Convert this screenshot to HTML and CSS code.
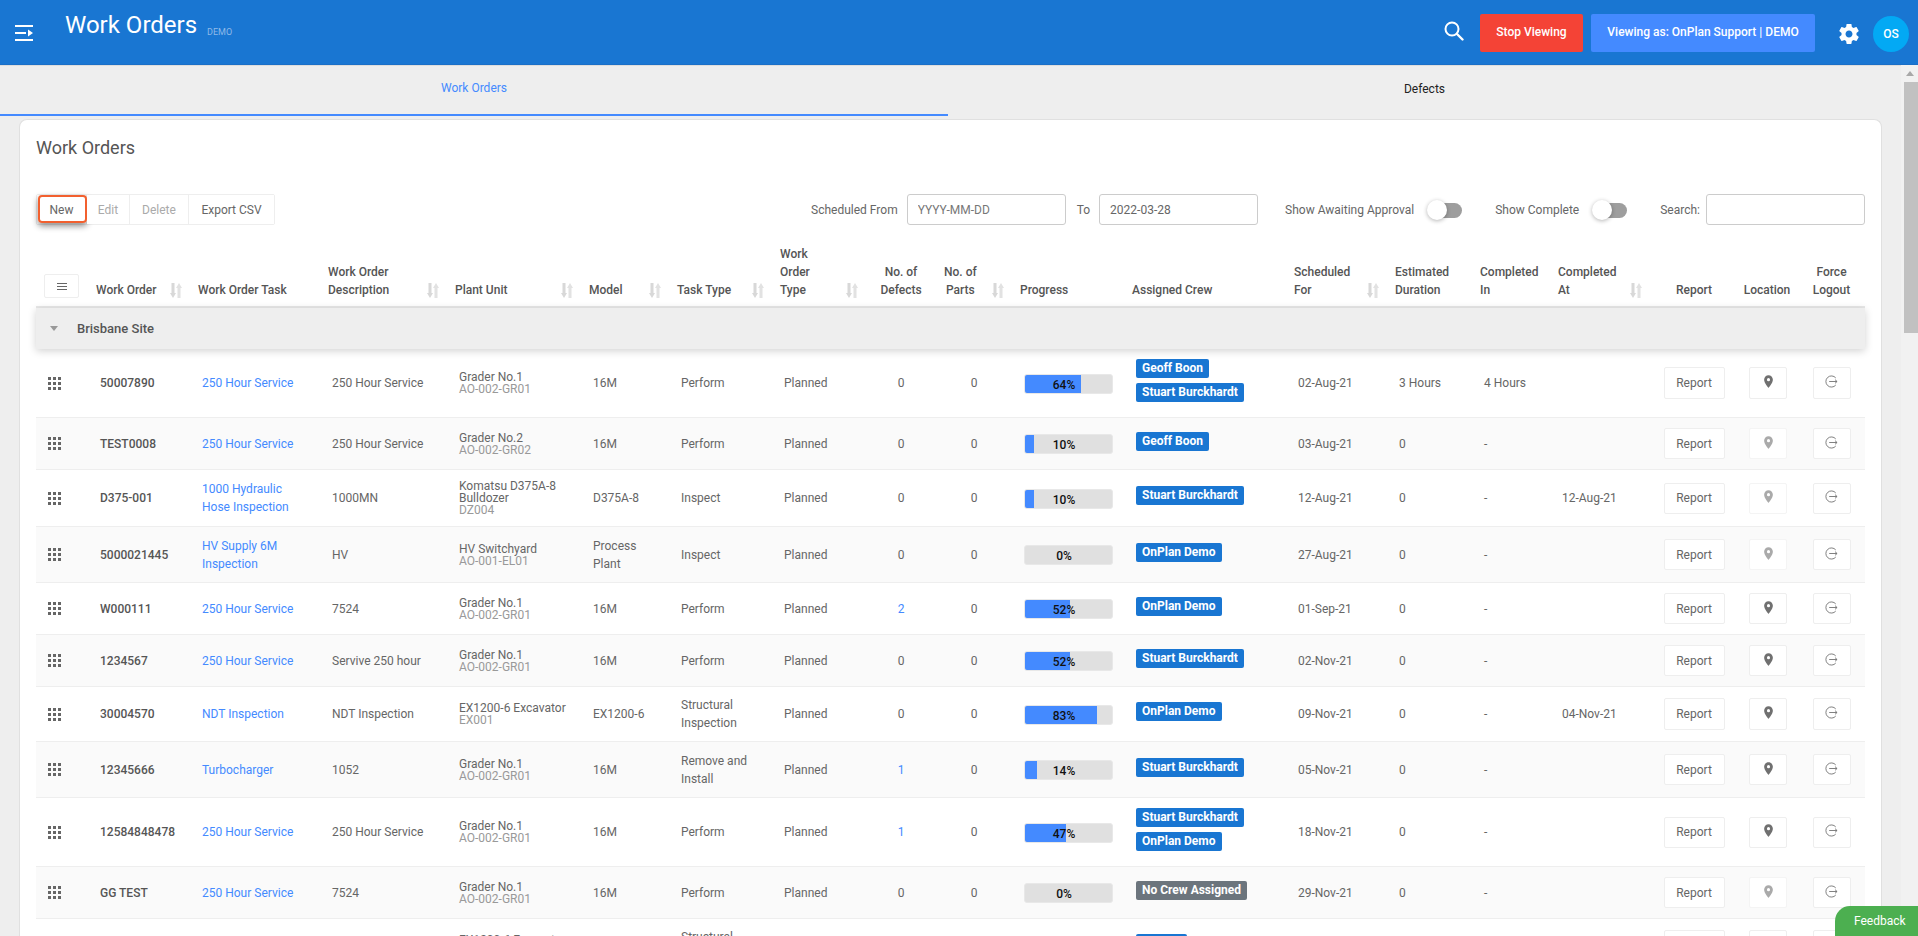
FILE: index.html
```html
<!DOCTYPE html>
<html lang="en">
<head>
<meta charset="utf-8">
<title>Work Orders</title>
<link rel="stylesheet" href="styles.css">
</head>
<body>
<svg class="defs" width="0" height="0" aria-hidden="true">
  <symbol id="sort" viewBox="0 0 12 15"><path d="M1.500 0h3v10H6l-3 5-3-5h1.500z" fill="#d8d8d8"/><path d="M7.500 15h3V5H12L9 0 6 5h1.500z" fill="#e2e2e2"/></symbol>
  <symbol id="drag" viewBox="0 0 13 13"><path d="M0 0h3v3H0zM5 0h3v3H5zM10 0h3v3h-3zM0 5h3v3H0zM5 5h3v3H5zM10 5h3v3h-3zM0 10h3v3H0zM5 10h3v3H5zM10 10h3v3h-3z" fill="currentColor"/></symbol>
  <symbol id="pin" viewBox="0 0 24 24"><path fill="currentColor" d="M12 2C8.130 2 5 5.130 5 9c0 5.250 7 13 7 13s7-7.750 7-13c0-3.870-3.130-7-7-7zm0 9.500a2.500 2.500 0 0 1 0-5 2.500 2.500 0 0 1 0 5z"/></symbol>
  <symbol id="logout" viewBox="0 0 14 14"><path d="M11.600 3.200A6 6 0 1 0 11.600 10.800" fill="none" stroke="currentColor"/><path d="M4.500 7h8.500M10.800 5l2.200 2-2.200 2" fill="none" stroke="currentColor"/></symbol>
</svg>

<header class="topbar">
  <svg class="menu-icon" width="18" height="16" viewBox="0 0 18 16"><path d="M0 0h18v2H0zM0 7h11v2H0zM0 14h18v2H0zM13 4.500 18 8l-5 3.500z" fill="#fff"/></svg>
  <h1 class="page-title">Work Orders</h1>
  <span class="env">DEMO</span>
  <svg class="search-icon" width="20" height="20" viewBox="0 0 20 20"><circle cx="8" cy="8" r="6.500" fill="none" stroke="#fff" stroke-width="2"/><path d="M13 13l5.500 5.500" stroke="#fff" stroke-width="2.400" stroke-linecap="round"/></svg>
  <button class="top-btn stop">Stop Viewing</button>
  <button class="top-btn viewing">Viewing as: OnPlan Support | DEMO</button>
  <svg class="gear" width="24" height="24" viewBox="0 0 24 24"><path fill="#fff" d="M19.430 12.980c.040-.320.070-.640.070-.980s-.030-.660-.070-.980l2.110-1.650c.190-.150.240-.420.120-.640l-2-3.460c-.120-.220-.390-.300-.610-.220l-2.490 1c-.520-.400-1.080-.730-1.690-.980l-.380-2.650C14.460 2.180 14.250 2 14 2h-4c-.250 0-.460.180-.490.420l-.380 2.650c-.610.250-1.170.590-1.690.980l-2.490-1c-.230-.090-.490 0-.610.220l-2 3.460c-.130.220-.070.490.120.640l2.110 1.650c-.040.320-.070.650-.070.980s.030.660.070.980l-2.110 1.650c-.190.150-.240.420-.120.640l2 3.460c.120.220.390.300.610.220l2.490-1c.520.400 1.080.730 1.690.980l.380 2.650c.030.240.240.420.490.420h4c.250 0 .460-.180.490-.420l.380-2.650c.610-.250 1.170-.590 1.690-.980l2.490 1c.230.090.490 0 .610-.220l2-3.460c.120-.220.070-.490-.120-.640l-2.110-1.650zM12 15.500c-1.930 0-3.500-1.570-3.500-3.500s1.570-3.500 3.500-3.500 3.500 1.570 3.500 3.500-1.570 3.500-3.500 3.500z"/></svg>
  <div class="avatar">OS</div>
</header>

<div class="layout">
  <main class="content">
    <nav class="tabs">
      <a class="tab tab-active">Work Orders</a>
      <a class="tab tab-second">Defects</a>
    </nav>
    <section class="card">
      <h2 class="card-title">Work Orders</h2>
      <div class="toolbar">
        <div class="btn-group">
          <button class="tool-btn hl">New</button>
          <button class="tool-btn off edit">Edit</button>
          <button class="tool-btn off del">Delete</button>
          <button class="tool-btn csv">Export CSV</button>
        </div>
        <div class="filters">
          <label class="lbl">Scheduled From</label>
          <input class="field" placeholder="YYYY-MM-DD">
          <label class="lbl lbl-to">To</label>
          <input class="field to-field" value="2022-03-28">
          <label class="lbl lbl-await">Show Awaiting Approval</label>
          <span class="toggle"></span>
          <label class="lbl lbl-comp">Show Complete</label>
          <span class="toggle"></span>
          <label class="lbl lbl-search">Search:</label>
          <input class="field">
        </div>
      </div>

      <table class="grid">
        <colgroup>
          <col class="c52"><col class="c102"><col class="c130"><col class="c127"><col class="c134"><col class="c88"><col class="c103"><col class="c94"><col class="c70"><col class="c76"><col class="c112"><col class="c162"><col class="c101"><col class="c85"><col class="c78"><col class="c100"><col class="c88"><col class="c60"><col class="c67">
        </colgroup>
        <thead>
          <tr>
            <th class="th-menu"><span class="col-menu"><i></i><i></i><i></i></span></th>
            <th><div class="th-in"><span>Work Order</span><svg class="sort"><use href="#sort"/></svg></div></th>
            <th><div class="th-in"><span>Work Order Task</span></div></th>
            <th><div class="th-in"><span>Work Order<br>Description</span><svg class="sort"><use href="#sort"/></svg></div></th>
            <th><div class="th-in"><span>Plant Unit</span><svg class="sort"><use href="#sort"/></svg></div></th>
            <th><div class="th-in"><span>Model</span><svg class="sort"><use href="#sort"/></svg></div></th>
            <th><div class="th-in"><span>Task Type</span><svg class="sort"><use href="#sort"/></svg></div></th>
            <th><div class="th-in"><span>Work<br>Order<br>Type</span><svg class="sort"><use href="#sort"/></svg></div></th>
            <th class="th-center">No. of<br>Defects</th>
            <th><div class="th-in th-parts"><span class="tc">No. of<br>Parts</span><svg class="sort"><use href="#sort"/></svg></div></th>
            <th><div class="th-in"><span>Progress</span></div></th>
            <th><div class="th-in"><span>Assigned Crew</span></div></th>
            <th><div class="th-in"><span>Scheduled<br>For</span><svg class="sort"><use href="#sort"/></svg></div></th>
            <th><div class="th-in"><span>Estimated<br>Duration</span></div></th>
            <th><div class="th-in"><span>Completed<br>In</span></div></th>
            <th><div class="th-in"><span>Completed<br>At</span><svg class="sort"><use href="#sort"/></svg></div></th>
            <th class="th-center">Report</th>
            <th class="th-center th-loc">Location</th>
            <th class="th-center">Force<br>Logout</th>
          </tr>
        </thead>
        <tbody>
          <tr class="group">
            <td colspan="19"><span class="caret"></span><span class="group-name">Brisbane Site</span></td>
          </tr>

          <tr class="h69">
            <td class="handle"><svg class="drag"><use href="#drag"/></svg></td>
            <td class="strong">50007890</td>
            <td><a class="link">250 Hour Service</a></td>
            <td>250 Hour Service</td>
            <td class="plant">Grader No.1<small>AO-002-GR01</small></td>
            <td>16M</td><td>Perform</td><td>Planned</td>
            <td class="num">0</td><td class="num">0</td>
            <td><div class="bar"><div class="fill" style="width:64%"></div><span class="pct">64%</span></div></td>
            <td class="crew"><div class="badges"><span class="badge">Geoff Boon</span><span class="badge">Stuart Burckhardt</span></div></td>
            <td>02-Aug-21</td><td>3 Hours</td><td>4 Hours</td><td></td>
            <td class="act"><button class="act-btn rep tall">Report</button></td>
            <td class="act"><button class="act-btn ico tall"><svg class="pin-i"><use href="#pin"/></svg></button></td>
            <td class="act"><button class="act-btn ico tall"><svg class="out-i"><use href="#logout"/></svg></button></td>
          </tr>

          <tr class="h52 alt">
            <td class="handle"><svg class="drag"><use href="#drag"/></svg></td>
            <td class="strong">TEST0008</td>
            <td><a class="link">250 Hour Service</a></td>
            <td>250 Hour Service</td>
            <td class="plant">Grader No.2<small>AO-002-GR02</small></td>
            <td>16M</td><td>Perform</td><td>Planned</td>
            <td class="num">0</td><td class="num">0</td>
            <td><div class="bar"><div class="fill" style="width:10%"></div><span class="pct">10%</span></div></td>
            <td class="crew"><div class="badges"><span class="badge">Geoff Boon</span></div></td>
            <td>03-Aug-21</td><td>0</td><td>-</td><td></td>
            <td class="act"><button class="act-btn rep">Report</button></td>
            <td class="act"><button class="act-btn ico dim"><svg class="pin-i"><use href="#pin"/></svg></button></td>
            <td class="act"><button class="act-btn ico"><svg class="out-i"><use href="#logout"/></svg></button></td>
          </tr>

          <tr class="h57">
            <td class="handle"><svg class="drag"><use href="#drag"/></svg></td>
            <td class="strong">D375-001</td>
            <td><a class="link">1000 Hydraulic Hose Inspection</a></td>
            <td>1000MN</td>
            <td class="plant">Komatsu D375A-8 Bulldozer<small>DZ004</small></td>
            <td>D375A-8</td><td>Inspect</td><td>Planned</td>
            <td class="num">0</td><td class="num">0</td>
            <td><div class="bar"><div class="fill" style="width:10%"></div><span class="pct">10%</span></div></td>
            <td class="crew"><div class="badges"><span class="badge">Stuart Burckhardt</span></div></td>
            <td>12-Aug-21</td><td>0</td><td>-</td><td>12-Aug-21</td>
            <td class="act"><button class="act-btn rep">Report</button></td>
            <td class="act"><button class="act-btn ico dim"><svg class="pin-i"><use href="#pin"/></svg></button></td>
            <td class="act"><button class="act-btn ico"><svg class="out-i"><use href="#logout"/></svg></button></td>
          </tr>

          <tr class="h56 alt">
            <td class="handle"><svg class="drag"><use href="#drag"/></svg></td>
            <td class="strong">5000021445</td>
            <td><a class="link">HV Supply 6M Inspection</a></td>
            <td>HV</td>
            <td class="plant">HV Switchyard<small>AO-001-EL01</small></td>
            <td>Process Plant</td><td>Inspect</td><td>Planned</td>
            <td class="num">0</td><td class="num">0</td>
            <td><div class="bar"><div class="fill" style="width:0%"></div><span class="pct">0%</span></div></td>
            <td class="crew"><div class="badges"><span class="badge">OnPlan Demo</span></div></td>
            <td>27-Aug-21</td><td>0</td><td>-</td><td></td>
            <td class="act"><button class="act-btn rep">Report</button></td>
            <td class="act"><button class="act-btn ico dim"><svg class="pin-i"><use href="#pin"/></svg></button></td>
            <td class="act"><button class="act-btn ico"><svg class="out-i"><use href="#logout"/></svg></button></td>
          </tr>

          <tr class="h52">
            <td class="handle"><svg class="drag"><use href="#drag"/></svg></td>
            <td class="strong">W000111</td>
            <td><a class="link">250 Hour Service</a></td>
            <td>7524</td>
            <td class="plant">Grader No.1<small>AO-002-GR01</small></td>
            <td>16M</td><td>Perform</td><td>Planned</td>
            <td class="num"><a class="link">2</a></td><td class="num">0</td>
            <td><div class="bar"><div class="fill" style="width:52%"></div><span class="pct">52%</span></div></td>
            <td class="crew"><div class="badges"><span class="badge">OnPlan Demo</span></div></td>
            <td>01-Sep-21</td><td>0</td><td>-</td><td></td>
            <td class="act"><button class="act-btn rep">Report</button></td>
            <td class="act"><button class="act-btn ico"><svg class="pin-i"><use href="#pin"/></svg></button></td>
            <td class="act"><button class="act-btn ico"><svg class="out-i"><use href="#logout"/></svg></button></td>
          </tr>

          <tr class="h52 alt">
            <td class="handle"><svg class="drag"><use href="#drag"/></svg></td>
            <td class="strong">1234567</td>
            <td><a class="link">250 Hour Service</a></td>
            <td>Servive 250 hour</td>
            <td class="plant">Grader No.1<small>AO-002-GR01</small></td>
            <td>16M</td><td>Perform</td><td>Planned</td>
            <td class="num">0</td><td class="num">0</td>
            <td><div class="bar"><div class="fill" style="width:52%"></div><span class="pct">52%</span></div></td>
            <td class="crew"><div class="badges"><span class="badge">Stuart Burckhardt</span></div></td>
            <td>02-Nov-21</td><td>0</td><td>-</td><td></td>
            <td class="act"><button class="act-btn rep">Report</button></td>
            <td class="act"><button class="act-btn ico"><svg class="pin-i"><use href="#pin"/></svg></button></td>
            <td class="act"><button class="act-btn ico"><svg class="out-i"><use href="#logout"/></svg></button></td>
          </tr>

          <tr class="h55">
            <td class="handle"><svg class="drag"><use href="#drag"/></svg></td>
            <td class="strong">30004570</td>
            <td><a class="link">NDT Inspection</a></td>
            <td>NDT Inspection</td>
            <td class="plant">EX1200-6 Excavator<small>EX001</small></td>
            <td>EX1200-6</td><td>Structural Inspection</td><td>Planned</td>
            <td class="num">0</td><td class="num">0</td>
            <td><div class="bar"><div class="fill" style="width:83%"></div><span class="pct">83%</span></div></td>
            <td class="crew"><div class="badges"><span class="badge">OnPlan Demo</span></div></td>
            <td>09-Nov-21</td><td>0</td><td>-</td><td>04-Nov-21</td>
            <td class="act"><button class="act-btn rep tall">Report</button></td>
            <td class="act"><button class="act-btn ico tall"><svg class="pin-i"><use href="#pin"/></svg></button></td>
            <td class="act"><button class="act-btn ico tall"><svg class="out-i"><use href="#logout"/></svg></button></td>
          </tr>

          <tr class="h56 alt">
            <td class="handle"><svg class="drag"><use href="#drag"/></svg></td>
            <td class="strong">12345666</td>
            <td><a class="link">Turbocharger</a></td>
            <td>1052</td>
            <td class="plant">Grader No.1<small>AO-002-GR01</small></td>
            <td>16M</td><td>Remove and Install</td><td>Planned</td>
            <td class="num"><a class="link">1</a></td><td class="num">0</td>
            <td><div class="bar"><div class="fill" style="width:14%"></div><span class="pct">14%</span></div></td>
            <td class="crew"><div class="badges"><span class="badge">Stuart Burckhardt</span></div></td>
            <td>05-Nov-21</td><td>0</td><td>-</td><td></td>
            <td class="act"><button class="act-btn rep">Report</button></td>
            <td class="act"><button class="act-btn ico"><svg class="pin-i"><use href="#pin"/></svg></button></td>
            <td class="act"><button class="act-btn ico"><svg class="out-i"><use href="#logout"/></svg></button></td>
          </tr>

          <tr class="h69">
            <td class="handle"><svg class="drag"><use href="#drag"/></svg></td>
            <td class="strong">12584848478</td>
            <td><a class="link">250 Hour Service</a></td>
            <td>250 Hour Service</td>
            <td class="plant">Grader No.1<small>AO-002-GR01</small></td>
            <td>16M</td><td>Perform</td><td>Planned</td>
            <td class="num"><a class="link">1</a></td><td class="num">0</td>
            <td><div class="bar"><div class="fill" style="width:47%"></div><span class="pct">47%</span></div></td>
            <td class="crew"><div class="badges"><span class="badge">Stuart Burckhardt</span><span class="badge">OnPlan Demo</span></div></td>
            <td>18-Nov-21</td><td>0</td><td>-</td><td></td>
            <td class="act"><button class="act-btn rep">Report</button></td>
            <td class="act"><button class="act-btn ico"><svg class="pin-i"><use href="#pin"/></svg></button></td>
            <td class="act"><button class="act-btn ico"><svg class="out-i"><use href="#logout"/></svg></button></td>
          </tr>

          <tr class="h52 alt">
            <td class="handle"><svg class="drag"><use href="#drag"/></svg></td>
            <td class="strong">GG TEST</td>
            <td><a class="link">250 Hour Service</a></td>
            <td>7524</td>
            <td class="plant">Grader No.1<small>AO-002-GR01</small></td>
            <td>16M</td><td>Perform</td><td>Planned</td>
            <td class="num">0</td><td class="num">0</td>
            <td><div class="bar"><div class="fill" style="width:0%"></div><span class="pct">0%</span></div></td>
            <td class="crew"><div class="badges"><span class="badge grey">No Crew Assigned</span></div></td>
            <td>29-Nov-21</td><td>0</td><td>-</td><td></td>
            <td class="act"><button class="act-btn rep">Report</button></td>
            <td class="act"><button class="act-btn ico dim"><svg class="pin-i"><use href="#pin"/></svg></button></td>
            <td class="act"><button class="act-btn ico"><svg class="out-i"><use href="#logout"/></svg></button></td>
          </tr>

          <tr class="h55">
            <td class="handle"><svg class="drag"><use href="#drag"/></svg></td>
            <td class="strong"></td>
            <td></td>
            <td></td>
            <td class="plant">EX1200-6 Excavator<small>EX001</small></td>
            <td></td><td>Structural Inspection</td><td></td>
            <td class="num"></td><td class="num"></td>
            <td></td>
            <td class="crew"><div class="badges"><span class="badge">OnPlan</span></div></td>
            <td></td><td></td><td></td><td></td>
            <td class="act"><button class="act-btn rep tall"></button></td>
            <td class="act"><button class="act-btn ico tall"></button></td>
            <td class="act"><button class="act-btn ico tall"></button></td>
          </tr>
        </tbody>
      </table>
    </section>
  </main>
  <aside class="scrollbar">
    <span class="sb-arrow"></span>
    <span class="sb-thumb"></span>
  </aside>
</div>

<a class="feedback">Feedback</a>
</body>
</html>
```

FILE: styles.css
```css
* { box-sizing: border-box; }
html, body { height: 100%; margin: 0; overflow: hidden; }
body { font-family: Roboto, "Liberation Sans", sans-serif; font-size: 12px; color: #555; background: #eee; display: flex; flex-direction: column; }
.defs { position: absolute; }
button { font-family: inherit; cursor: pointer; }

.topbar { flex: 0 0 65px; background: #1976d2; display: flex; align-items: center; border-bottom: 1px solid #1a6fc7; box-shadow: 0 1px 0 #ddd; }
.menu-icon { margin-left: 15px; margin-top: 1px; flex: none; }
.page-title { margin: 0 0 14px 32px; font-size: 24px; font-weight: 400; color: #fff; line-height: 28px; }
.env { margin: 0 0 0 10px; font-size: 9px; color: #8fb9e8; flex: 1; }
.search-icon { flex: none; margin: 0 16px 2px 0; }
.top-btn { height: 38px; border: 0; border-radius: 2px; color: #fff; font-size: 12px; font-weight: 500; margin-top: 2px; padding: 0 0 3px; }
.stop { width: 103px; background: #f44336; }
.viewing { width: 224px; margin-left: 8px; background: #448aff; }
.gear { margin-left: 22px; flex: none; margin-top: 3px; }
.avatar { width: 36px; height: 36px; margin: 4px 9px 0 12px; border-radius: 50%; background: #03a9f4; color: #fff; font-weight: 500; display: flex; align-items: center; justify-content: center; }

.layout { flex: 1; min-height: 0; display: flex; }
.content { flex: 1; min-width: 0; overflow: hidden; }
.scrollbar { flex: 0 0 17px; background: #f1f1f1; display: flex; flex-direction: column; padding-left: 3px; }
.sb-arrow { width: 0; height: 0; margin: 6px 0 0 2px; border: 4px solid transparent; border-top: 0; border-bottom: 5px solid #a8a8a8; }
.sb-thumb { height: 251px; margin-top: 6px; background: #c1c1c1; }

.tabs { display: flex; height: 51px; }
.tab { display: flex; align-items: center; justify-content: center; padding-bottom: 4px; font-size: 12px; color: #222; }
.tab-active { width: 948px; color: #448aff; border-bottom: 2px solid #448aff; }
.tab-second { flex: 1; }

.card { margin: 3px 19px 0; background: #fff; border: 1px solid #e0e0e0; border-bottom: 0; border-radius: 8px 8px 0 0; padding: 17px 16px 0; height: 900px; }
.card-title { margin: 0; font-size: 18px; font-weight: 400; line-height: 22px; color: #555; }

.toolbar { display: flex; justify-content: space-between; align-items: center; margin-top: 35px; height: 31px; }
.btn-group { display: flex; height: 31px; border: 1px solid #eee; border-radius: 2px; }
.tool-btn { position: relative; height: 29px; padding: 0; border: 0; border-right: 1px solid #eee; background: #fff; color: #666; font-size: 12px; }
.tool-btn:last-child { border-right: 0; }
.hl { width: 50px; }
.edit { width: 43px; }
.del { width: 59px; }
.csv { width: 85px; }
.off { color: #aaa; }
.hl::after { content: ""; position: absolute; left: 1px; top: 0; right: -1px; bottom: 1px; border: 2px solid #f2602f; border-radius: 4px; box-shadow: 0 3px 6px rgba(0,0,0,.45); }

.filters { display: flex; align-items: center; }
.lbl { color: #666; font-size: 12px; white-space: nowrap; }
.field { width: 159px; height: 31px; margin-left: 9px; padding: 0 10px; border: 1px solid #ccc; border-radius: 3px; background: #fff; font: 12px Roboto, sans-serif; color: #666; outline: 0; }
.field::placeholder { color: #777; }
.lbl-to { margin-left: 11px; }
.lbl-await { margin-left: 27px; }
.lbl-comp { margin-left: 33px; }
.lbl-search { margin-left: 33px; }
.lbl-search + .field { margin-left: 6px; }
.toggle { position: relative; width: 35px; height: 20px; margin-left: 13px; flex: none; }
.toggle::before { content: ""; position: absolute; left: 6px; right: 0; top: 3px; height: 15px; border-radius: 8px; background: #9e9e9e; }
.toggle::after { content: ""; position: absolute; left: 0; top: 0; width: 20px; height: 20px; border-radius: 50%; background: #fff; box-shadow: 0 1px 4px rgba(0,0,0,.3); }

.grid { width: 1829px; margin-top: 20px; table-layout: fixed; border-collapse: separate; border-spacing: 0; }
.c52 { width: 52px; } .c102 { width: 102px; } .c130 { width: 130px; } .c127 { width: 127px; } .c134 { width: 134px; }
.c88 { width: 88px; } .c103 { width: 103px; } .c94 { width: 94px; } .c70 { width: 70px; } .c76 { width: 76px; }
.c112 { width: 112px; } .c162 { width: 162px; } .c101 { width: 101px; } .c85 { width: 85px; } .c78 { width: 78px; }
.c100 { width: 100px; } .c60 { width: 60px; } .c67 { width: 67px; }

th { padding: 0 8px 7px; vertical-align: bottom; text-align: left; font-size: 12px; font-weight: 500; line-height: 18px; color: #555; background: #fff; border-bottom: 2px solid #e8e8e8; }
.th-center { padding-left: 0; padding-right: 0; text-align: center; }
.th-loc { padding-right: 2px; }
.th-menu { padding: 0 0 8px 8px; }
.th-in { display: flex; justify-content: space-between; align-items: flex-end; }
.tc { text-align: center; }
.sort { width: 12px; height: 15px; flex: none; margin-bottom: 1px; }
.col-menu { width: 35px; height: 24px; display: flex; flex-direction: column; gap: 2px; align-items: center; justify-content: center; border: 1px solid #eee; border-radius: 2px; }
.col-menu i { width: 10px; height: 1px; background: #666; }

td { padding: 0 12px; font-size: 12px; line-height: 18px; color: #666; vertical-align: middle; border-bottom: 1px solid #eee; }
.alt td { background: #fafafa; }
.h52 { height: 52px; } .h55 { height: 55px; } .h56 { height: 56px; } .h57 { height: 57px; } .h69 { height: 69px; }

.group td { height: 41px; padding: 0 0 0 14px; background: #eee; border-bottom: 0; }
.group { box-shadow: 0 2px 8px rgba(0,0,0,.18); }
.caret { display: inline-block; width: 0; height: 0; margin-right: 19px; vertical-align: middle; border: 4px solid transparent; border-top: 5px solid #999; border-bottom: 0; }
.group-name { font-size: 13px; font-weight: 500; color: #555; vertical-align: middle; }

.handle { color: #666; }
.drag { width: 13px; height: 13px; display: block; }
.strong { font-weight: 500; color: #555; white-space: nowrap; }
.link { color: #448aff; }
.plant { line-height: 12px; }
.plant small { display: block; font-size: 12px; color: #999; }
.num { padding: 0; text-align: center; }

.bar { position: relative; width: 89px; height: 20px; border: 1px solid #e8e8e8; border-radius: 3px; background: #e0e0e0; overflow: hidden; margin-top: 1px; }
.fill { height: 100%; background: #448aff; }
.pct { position: absolute; left: 0; right: 9px; top: 1px; text-align: center; font-size: 12px; font-weight: 500; line-height: 18px; color: #111; }

.crew { padding-bottom: 5px; }
.badges { display: flex; flex-direction: column; align-items: flex-start; gap: 5px; }
.badge { padding: 0 6px 1px; border-radius: 2px; background: #1976d2; color: #fff; font-size: 12px; font-weight: 700; line-height: 18px; white-space: nowrap; }
.grey { background: #6c757d; }

.act { padding: 0; text-align: center; }
.act-btn { height: 31px; padding: 0; background: #fff; border: 1px solid #eee; border-radius: 2px; color: #666; font-size: 12px; vertical-align: middle; }
.tall { height: 32px; }
.rep { width: 61px; }
.ico { width: 38px; display: inline-flex; align-items: center; justify-content: center; padding-bottom: 3px; }
.pin-i { width: 15px; height: 15px; color: #707070; }
.dim { border-color: #f4f4f4; }
.dim .pin-i { color: #aaa; }
.out-i { width: 13px; height: 13px; color: #777; }

.feedback { position: fixed; right: 0; bottom: 0; width: 83px; height: 30px; padding-left: 19px; display: flex; align-items: center; background: #4caf50; color: #fff; font-size: 12px; border-radius: 15px 0 0 0; }
```
